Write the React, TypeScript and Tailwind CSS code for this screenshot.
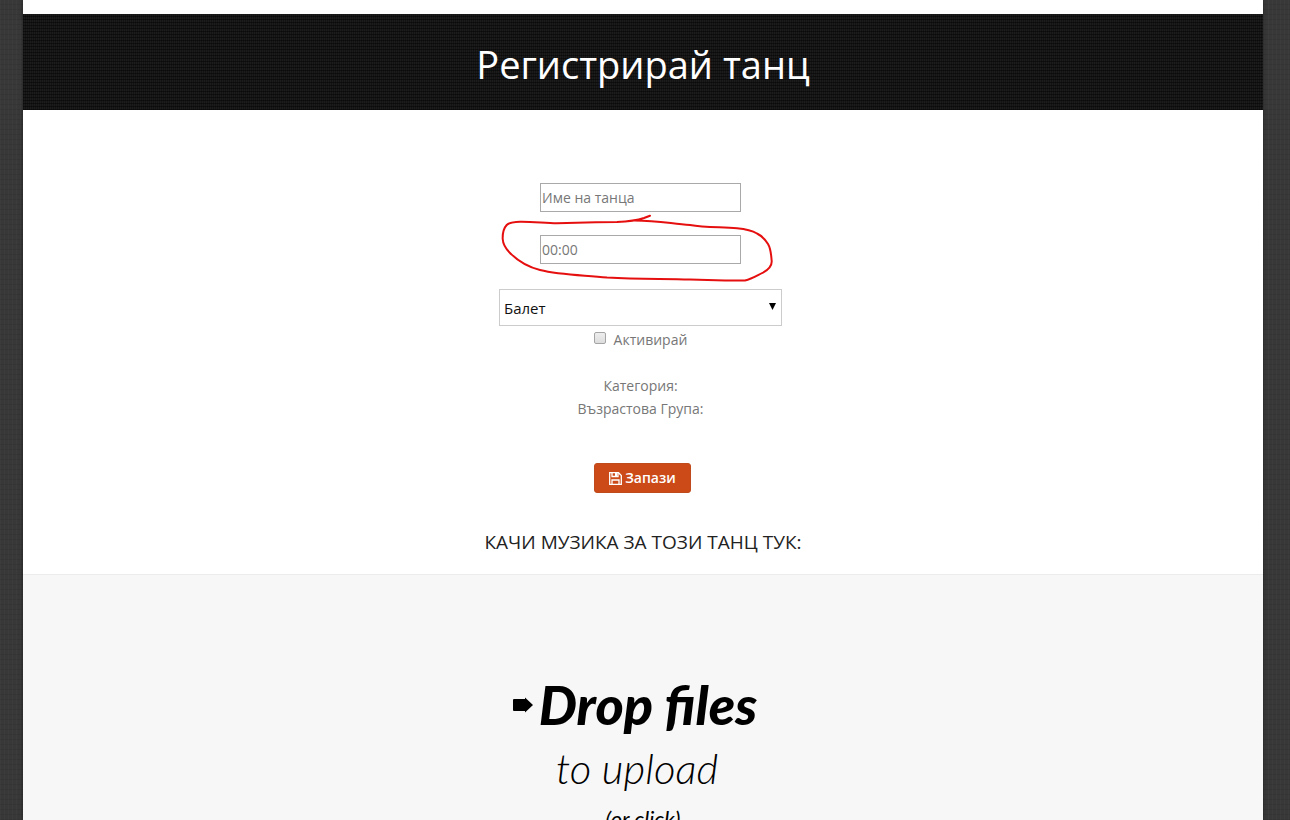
import { useState } from "react"

const DANCES = ["Балет", "Модерен балет", "Хип-хоп", "Народни танци"]

function HandDrawnCircle() {
  return (
    <svg
      className="pointer-events-none absolute -left-10 -top-[22px] h-[72px] w-[276px]"
      viewBox="0 0 276 72"
      fill="none"
      stroke="#e60f0f"
      strokeWidth="2"
      strokeLinecap="round"
      strokeLinejoin="round"
      aria-hidden="true"
    >
      <path d="M150 2.7 L144 5 C138 7 128 8.500 117 9 L96 9.300 L57 10.300 C44 10 32 8.500 20 8.700 C13 9 9 9.500 6.700 12 C3 16 2.500 20 2.700 26 C3 32 6 36 10 40 C18 48 28 54 40 57 C60 62 82 62 107 64.500 C140 66.500 165 65.500 190 66.500 L225 67.500 L245 67.500 C252 66 258 62 263 59.700 C268 57 272 53 271.700 48 C271 41 271 36 268 31 C265 26 262 23 257 20.500 C251 17 244 16 237 15.300 C220 14 205 14.500 190 12 C172 11 160 7.500 134 7.500" />
    </svg>
  )
}

function SaveIcon() {
  return (
    <svg className="h-[13px] w-[13px]" viewBox="0 0 13 13" fill="none" stroke="currentColor" strokeWidth="1.3" aria-hidden="true">
      <path d="M.7 .7H9.500L12.300 3.500V12.300H.7Z" />
      <path d="M3 .7V4.500H9V.7M3 12.300V8H10V12.300" />
      <path d="M6 1H8V4H6Z" fill="currentColor" stroke="none" />
    </svg>
  )
}

function DanceForm() {
  const [dance, setDance] = useState(DANCES[0])
  const [active, setActive] = useState(false)

  return (
    <form
      className="flex flex-col items-center pt-[73px] pr-px text-sm leading-[23px] text-[#777]"
      onSubmit={(e) => e.preventDefault()}
    >
      <div className="flex flex-col items-center pr-1">
        <input
          type="text"
          aria-label="Име на танца"
          placeholder="Име на танца"
          className="h-[29px] w-[201px] border border-[#a9a9a9] bg-white px-px placeholder:text-[#777]"
        />
        <div className="relative mt-[23px] h-[29px]">
          <input
            type="text"
            aria-label="Времетраене"
            placeholder="00:00"
            className="h-[29px] w-[201px] border border-[#a9a9a9] bg-white px-px placeholder:text-[#777]"
          />
          <HandDrawnCircle />
        </div>
        <div className="relative mt-[25px]">
          <select
            aria-label="Танц"
            value={dance}
            onChange={(e) => setDance(e.target.value)}
            className="block h-[37px] w-[283px] appearance-none border border-[#ccc] bg-white px-1 pt-0.5 text-[15px] text-[#111]"
          >
            {DANCES.map((name) => (
              <option key={name}>{name}</option>
            ))}
          </select>
          <svg className="pointer-events-none absolute right-1.5 top-3.5 h-[7px] w-[7px]" viewBox="0 0 7 7" aria-hidden="true">
            <path d="M0 0H7L3.500 7Z" fill="#000" />
          </svg>
        </div>
        <label className="mt-0.5 flex items-center gap-2">
          <input
            type="checkbox"
            checked={active}
            onChange={(e) => setActive(e.target.checked)}
            className="mb-1 h-3 w-3 appearance-none rounded-xs border border-[#a5a5a5] bg-linear-to-b from-[#eee] to-[#ddd] checked:bg-[#777]"
          />
          Активирай
        </label>
        <p className="mt-[23px]">Категория:</p>
        <p>Възрастова Група:</p>
      </div>
      <button
        type="submit"
        className="mt-[43px] flex h-[30px] w-[97px] items-center justify-center gap-[3px] rounded-[3px] border border-[#bf4a1c] bg-[#cc4a17] text-sm font-semibold text-white"
      >
        <SaveIcon />
        Запази
      </button>
    </form>
  )
}

function DropZone() {
  return (
    <label className="block flex-1 cursor-pointer border-t border-[#ececec] bg-[#f7f7f7] pt-[93px] text-center font-['Lato',sans-serif] italic text-black">
      <input type="file" multiple className="sr-only" />
      <span className="flex items-center justify-center gap-1.5 pr-4 text-[54px] font-black leading-[74px]">
        <svg className="h-4 w-5" viewBox="0 0 20 16" aria-hidden="true">
          <path d="M1 2H12V0.500L20 8L12 15.500V14H1Q0 14 0 13V3Q0 2 1 2Z" />
        </svg>
        Drop files
      </span>
      <span className="block pr-3 text-[42px] font-light leading-[52px]">to upload</span>
      <span className="block text-[22px] font-normal leading-[50px]">(or click)</span>
    </label>
  )
}

export default function App() {
  return (
    <div className="h-screen overflow-hidden bg-[#383838] bg-[repeating-linear-gradient(90deg,#ffffff05_0_1px,transparent_1px_4px),repeating-linear-gradient(0deg,#00000012_0_1px,transparent_1px_5px)] pl-[23px] pr-[27px] font-['Open_Sans',sans-serif]">
      <main className="flex h-full flex-col bg-white pt-3.5 shadow-[0_0_4px_#0006]">
        <header className="flex h-24 shrink-0 items-center justify-center bg-[#1c1c1c] bg-[repeating-linear-gradient(90deg,#00000050_0_1px,transparent_1px_2px),repeating-linear-gradient(0deg,#00000070_0_1px,transparent_1px_3px)]">
          <h1 className="pt-1 text-[38px] font-medium leading-[60px] text-white">Регистрирай танц</h1>
        </header>
        <DanceForm />
        <h2 className="mb-[18px] mt-[35px] text-center text-[19px] leading-7 text-[#222]">
          КАЧИ МУЗИКА ЗА ТОЗИ ТАНЦ ТУК:
        </h2>
        <DropZone />
      </main>
    </div>
  )
}
